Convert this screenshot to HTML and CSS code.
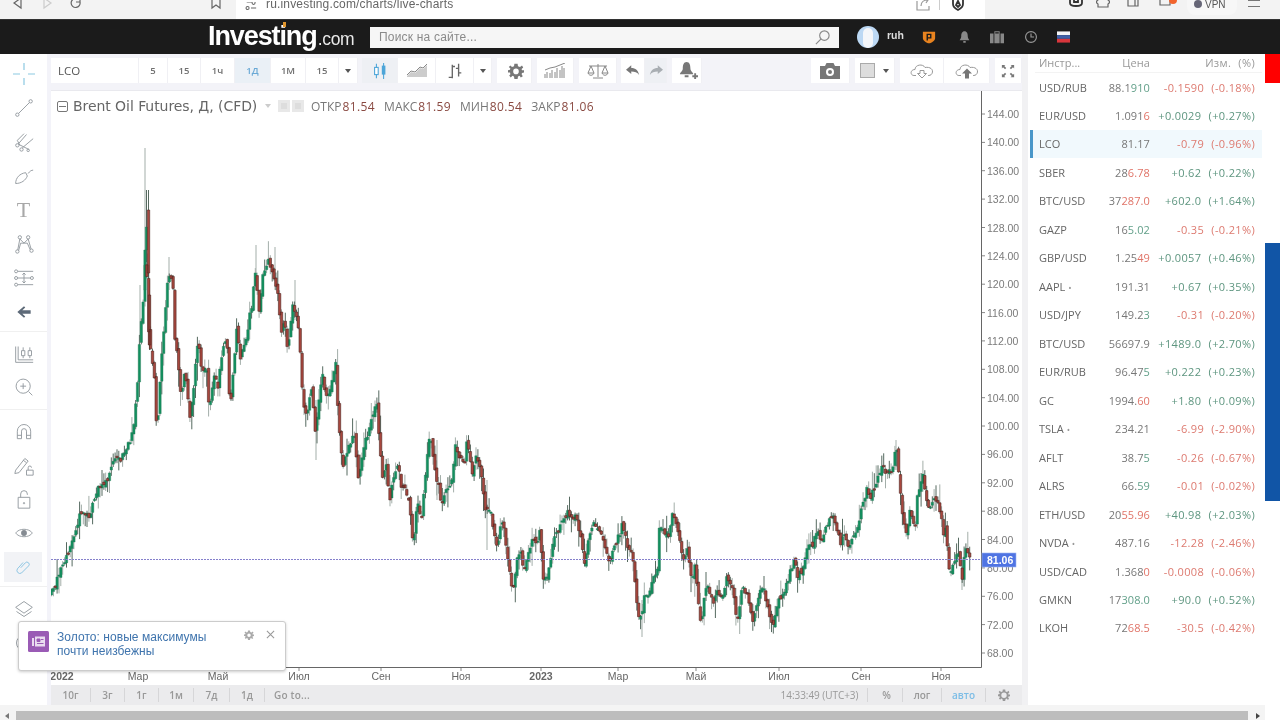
FILE: index.html
```html
<!DOCTYPE html>
<html lang="ru">
<head>
<meta charset="utf-8">
<title>Brent Oil Futures</title>
<link rel="stylesheet" href="styles.css">
</head>
<body>
<div class="browser">
  <div class="nav">
    <svg class="bi" viewBox="0 0 14 14"><path d="M10 1 L3 6 L10 11 Z"/></svg>
    <svg class="bi faded" viewBox="0 0 14 14"><path d="M4 1 L11 6 L4 11 Z"/></svg>
    <svg class="bi" viewBox="0 0 14 14"><path d="M11 5 A4.500 4.500 0 1 1 7 1.500 M11 1 V5 H7"/></svg>
  </div>
  <svg class="bi book" viewBox="0 0 14 14"><path d="M3 0 V11 L7 8 L11 11 V0"/></svg>
  <div class="url">
    <svg class="bi urlic" viewBox="0 0 14 14"><path d="M2 0 H8 M7 7 H13"/><circle cx="10" cy="1" r="1.800"/><circle cx="3" cy="7" r="1.800"/></svg>
    <span class="urltext">ru.investing.com/charts/live-charts</span>
    <svg class="bi share" viewBox="0 0 14 14"><path d="M1 3 V12 H13 V8 M5 8 C5 4 8 2 12 2 M9 0 L12 2 L10 5"/></svg>
    <i class="urlsep"></i>
    <svg class="bi shield" viewBox="0 0 14 14"><path class="dark" d="M2 0 H12 V6 C12 9 9 11 7 12 C5 11 2 9 2 6 Z M7 3 L5 7 L7 9 L9 7 Z"/></svg>
  </div>
  <div class="ext">
    <svg class="bi e1" viewBox="0 0 14 14"><path class="dark" d="M1 0 V7 C1 11 13 11 13 7 V0 M5 0 V6 H9 V0"/></svg>
    <svg class="bi e2" viewBox="0 0 14 14"><path d="M2 0 V4 C0 5 0 7 2 8 V11 H12 V8 C14 7 14 5 12 4 V0"/></svg>
    <svg class="bi e3" viewBox="0 0 14 14"><path d="M2 0 V10 H12 V0 M9 0 V10"/></svg>
    <div class="notif"><svg class="bi e4" viewBox="0 0 14 14"><path d="M2 0 V9 H12 V0"/></svg><i class="notif-dot"></i></div>
    <div class="vpn"><i class="vpn-dot"></i>VPN</div>
    <div class="burger"></div>
  </div>
</div>

<header class="site">
  <div class="logo"><i class="logo-tick"></i>Investing<span class="logo-com">.com</span></div>
  <div class="search">
    <span class="search-ph">Поиск на сайте...</span>
    <svg class="search-ic" viewBox="0 0 18 18"><circle cx="11" cy="7" r="5"/><path d="M7.500 10.500 L2 16"/></svg>
  </div>
  <div class="avatar"><i class="avatar-head"></i></div>
  <span class="user">ruh</span>
  <svg class="hic pro" viewBox="0 0 16 16"><path d="M1 2 H15 V9 C15 12 11 15 8 15 C5 15 1 12 1 9 Z"/><path class="pro-p" d="M6 12 V5 H10 V9 H6"/></svg>
  <svg class="hic bell" viewBox="0 0 16 16"><path d="M8 1 C11 1 12 4 12 7 C12 10 14 11 14 12 H2 C2 11 4 10 4 7 C4 4 5 1 8 1 Z M6.500 13 H9.500 V15 H6.500 Z"/></svg>
  <svg class="hic bag" viewBox="0 0 16 16"><path d="M0 4 H5 V1.500 H11 V4 H16 V15 H0 Z M6 4 H10 V2.500 H6 Z M4 4 V15 H5 V4 Z M11 4 V15 H12 V4 Z" fill-rule="evenodd"/></svg>
  <svg class="hic clock" viewBox="0 0 16 16"><circle cx="8" cy="8" r="6.200"/><path d="M8 4 V8 H11.500"/></svg>
  <svg class="hic flag" viewBox="0 0 14 12"><rect width="14" height="4" y="0" fill="#f4f4f6"/><rect width="14" height="4" y="4" fill="#3f5fa8"/><rect width="14" height="4" y="8" fill="#d8363c"/></svg>
</header>

<main class="main">
  <aside class="tools">
    <div class="tool-group g1">
      <div class="tool"><svg class="ti blue" viewBox="0 0 24 24"><path d="M12 1 V8 M12 16 V23 M1 12 H8 M16 12 H23"/></svg></div>
      <div class="tool"><svg class="ti" viewBox="0 0 24 24"><circle cx="4" cy="20" r="2"/><circle cx="20" cy="4" r="2"/><path d="M5.500 18.500 L18.500 5.500"/></svg></div>
      <div class="tool"><svg class="ti" viewBox="0 0 24 24"><circle cx="4" cy="16" r="2"/><circle cx="9" cy="21" r="2"/><circle cx="17" cy="22" r="1.500"/><path d="M5 14.500 L15 3 M7 16 L4 10 L12 2 M10 19 L23 8 M6 15 L18 21"/></svg></div>
      <div class="tool"><svg class="ti" viewBox="0 0 24 24"><path d="M2 21 C2 14 7 9 14 8 L16 12 C14 17 9 21 2 21 Z M17 9 C19 6 21 5 23 5"/></svg></div>
      <div class="tool"><span class="ti-t">T</span></div>
      <div class="tool"><svg class="ti" viewBox="0 0 24 24"><circle cx="4" cy="21" r="2"/><circle cx="7" cy="4" r="2"/><circle cx="17" cy="4" r="2"/><circle cx="21" cy="20" r="2"/><path d="M4.500 19 L7 6 L12 11 L17 6 L20.500 18 M5.500 20 L8 11 H16 L19.500 19"/></svg></div>
      <div class="tool"><svg class="ti" viewBox="0 0 24 24"><circle cx="2.500" cy="4" r="1.800"/><circle cx="2.500" cy="12" r="1.800"/><circle cx="2.500" cy="20" r="1.800"/><circle cx="21.500" cy="12" r="1.800"/><path d="M4.500 4 H23 M4.500 12 H19.500 M4.500 20 H23 M12 6 V18 M10 8 L12 6 L14 8 M10 16 L12 18 L14 16"/></svg></div>
      <div class="tool"><svg class="ti solid" viewBox="0 0 24 24"><path d="M4 12 L12 5 L13.500 6.500 L10 10 H20 V14 H10 L13.500 17.500 L12 19 Z"/></svg></div>
    </div>
    <div class="tool-group g2">
      <div class="tool"><svg class="ti" viewBox="0 0 24 24"><path d="M2 3 V22 H23 M5 3 V19 H23 M9 8 H13 V14 H9 Z M11 4 V8 M11 14 V17 M17 8 H21 V14 H17 Z M19 4 V8 M19 14 V17"/></svg></div>
      <div class="tool"><svg class="ti" viewBox="0 0 24 24"><circle cx="11" cy="11" r="8.500"/><path d="M11 7.500 V14.500 M7.500 11 H14.500 M17.500 17.500 L22 22"/></svg></div>
    </div>
    <div class="tool-group g3">
      <div class="tool"><svg class="ti" viewBox="0 0 24 24"><path d="M4 20 V11 A8 8 0 0 1 20 11 V20 H15 V11 A3 3 0 0 0 9 11 V20 Z M4 16 H9 M15 16 H20"/></svg></div>
      <div class="tool"><svg class="ti" viewBox="0 0 24 24"><path d="M2 17 L13 3 L17 6 L6 20 L1 21 Z M11 5 L15 8 M15 17 H23 V23 H15 Z M17 17 V14 A2 2 0 0 1 21 14"/></svg></div>
      <div class="tool"><svg class="ti" viewBox="0 0 24 24"><path d="M5 10 H19 V23 H5 Z M8 10 V6 A4 4 0 0 1 16 6 V7"/><circle cx="12" cy="17" r="0.800"/></svg></div>
      <div class="tool"><svg class="ti" viewBox="0 0 24 24"><path d="M2 12 C6 6 18 6 22 12 C18 18 6 18 2 12 Z"/><circle class="fillc" cx="12" cy="12" r="3.500"/></svg></div>
      <div class="tool active"><svg class="ti lblue" viewBox="0 0 24 24"><path d="M9 13 L15 6.500 A3 3 0 0 1 19.500 10.500 L10 20 A4 4 0 0 1 4.500 14.500 L12 6"/></svg></div>
    </div>
    <div class="tool-group g4">
      <div class="tool"><svg class="ti" viewBox="0 0 24 24"><path d="M12 3 L22 10 L12 17 L2 10 Z M3 15 L12 21 L21 15"/></svg></div>
      <div class="tool"><svg class="ti" viewBox="0 0 24 24"><circle cx="12" cy="12" r="9"/></svg></div>
    </div>
  </aside>

  <section class="chartcol">
    <div class="toolbar">
      <div class="tb w-88 lco">LCO</div>
      <div class="tb-group">
        <div class="tb w-29">5</div><div class="tb w-33">15</div><div class="tb w-34">1ч</div><div class="tb w-36 sel">1Д</div><div class="tb w-35">1М</div><div class="tb w-33">15</div><div class="tb w-19"><i class="caret"></i></div>
      </div>
      <div class="tb-group gap-4">
        <div class="tb w-36 on"><svg class="tbi" viewBox="0 0 16 20"><path class="cblue" d="M4 2 V18 M12 1 V19"/><rect class="cblue nofill" x="2" y="6" width="4" height="8"/><rect class="cbluef" x="10" y="4" width="4" height="10"/></svg></div>
        <div class="tb w-38"><svg class="tbi wide" viewBox="0 0 22 14"><path class="fillg" d="M1 12 L5 8 L9 9 L14 4 L17 5 L21 1 V13 H1 Z"/><path d="M1 11 L5 7 L9 8 L14 3 L17 4 L21 0"/></svg></div>
        <div class="tb w-38"><svg class="tbi" viewBox="0 0 16 20"><path class="thick" d="M5 3 V18 M1 17 H5 M5 5 H8 M12 2 V16 M12 7 H9 M12 12 H15"/></svg></div>
        <div class="tb w-18"><i class="caret"></i></div>
      </div>
      <div class="tb w-35 gap-5 nudge"><svg class="tbi solid" viewBox="0 0 20 20"><path fill-rule="evenodd" d="M8 1 H12 L12.500 4 L15 5 L17.500 3 L19 5.500 L17 7.500 L17.500 9 H20 V12 L17.500 12.500 L17 14 L18.500 16.500 L16 18 L14.500 16 L12.500 17 L12 20 H8 L7.500 17 L5.500 16 L3.500 18 L1.500 15.500 L3 14 L2.500 12 H0 V9 L2.500 8.500 L3 7 L1 5 L3 3 L5 5 L7.500 4 Z M10 7 A3.500 3.500 0 1 0 10 14 A3.500 3.500 0 1 0 10 7 Z"/></svg></div>
      <div class="tb w-37 gap-5"><svg class="tbi wide" viewBox="0 0 22 16"><path d="M1 15 V11 M3 15 V9 M6 15 V10 M8 15 V7 M11 15 V9 M13 15 V5 M16 15 V7 M18 15 V3 M20 15 V5 M1 7 L6 5 L11 4 L16 2 L21 0" /></svg></div>
      <div class="tb w-38 gap-5"><svg class="tbi wide" viewBox="0 0 22 16"><path d="M11 1 V14 M6 15 H16 M2 3 H20 M4 3 L1 10 H7 Z M18 3 L15 10 H21 Z M1 10 C2 13 6 13 7 10 M15 10 C16 13 20 13 21 10"/></svg></div>
      <div class="tb-group gap-4">
        <div class="tb w-24"><svg class="tbi small solid" viewBox="0 0 16 12"><path d="M0 5 L6 0 V3 C11 3 14 6 15 11 C13 8 10 7 6 7 V10 Z"/></svg></div>
        <div class="tb w-22 on"><svg class="tbi small solid pale" viewBox="0 0 16 12"><path d="M16 5 L10 0 V3 C5 3 2 6 1 11 C3 8 6 7 10 7 V10 Z"/></svg></div>
      </div>
      <div class="tb w-30 gap-5"><svg class="tbi solid alert" viewBox="0 0 20 20"><path d="M8 1 C11 1 12 4 12 8 C12 11 15 12 15 14 H1 C1 12 4 11 4 8 C4 4 5 1 8 1 Z M6 15 H10 V17 H6 Z M14 15 H16 V13 H18 V15 H20 V17 H18 V19 H16 V17 H14 Z"/></svg></div>
      <div class="tb-spacer"></div>
      <div class="tb w-39"><svg class="tbi cam solid" viewBox="0 0 20 16"><path fill-rule="evenodd" d="M0 3 H5 L6.500 0 H13.500 L15 3 H20 V16 H0 Z M10 5 A4 4 0 1 0 10 13 A4 4 0 1 0 10 5 Z M10 7 A2 2 0 1 1 10 11 A2 2 0 1 1 10 7 Z"/></svg></div>
      <div class="tb-group gap-5">
        <div class="tb w-40 square-wrap"><i class="swatch"></i><i class="caret"></i></div>
      </div>
      <div class="tb-group gap-5">
        <div class="tb w-44"><svg class="tbi cloud" viewBox="0 0 24 16"><path d="M6 13 H4 C0 13 0 7 5 7 C5 2 13 1 15 5 C20 4 24 7 22 11 C21 13 19 13 18 13 M10 8 H14 V11 H16.500 L12 15.500 L7.500 11 H10 Z"/></svg></div>
        <div class="tb w-46"><svg class="tbi cloud" viewBox="0 0 24 16"><path d="M6 13 H4 C0 13 0 7 5 7 C5 2 13 1 15 5 C20 4 24 7 22 11 C21 13 19 13 18 13"/><path class="filld" d="M10 16 V11 H7 L12 6 L17 11 H14 V16 Z"/></svg></div>
      </div>
      <div class="tb w-27 gap-5"><svg class="tbi fs" viewBox="0 0 16 16"><path class="filld" d="M1 1 H5 L3.700 2.300 L6 4.600 L4.600 6 L2.300 3.700 L1 5 Z M15 1 V5 L13.700 3.700 L11.400 6 L10 4.600 L12.300 2.300 L11 1 Z M1 15 V11 L2.300 12.300 L4.600 10 L6 11.400 L3.700 13.700 L5 15 Z M15 15 H11 L12.300 13.700 L10 11.400 L11.400 10 L13.700 12.300 L15 11 Z"/></svg></div>
    </div>

    <div class="plot">
      <svg id="chart" class="chart" viewBox="51 91 971 594" preserveAspectRatio="none"></svg>
      <div class="legend">
        <i class="collapse"></i>
        <span class="l-title">Brent Oil Futures, Д, (CFD)</span>
        <i class="l-caret"></i>
        <i class="l-sq"></i><i class="l-sq"></i>
        <span class="l-k k1">ОТКР</span><span class="l-v">81.54</span>
        <span class="l-k">МАКС</span><span class="l-v">81.59</span>
        <span class="l-k">МИН</span><span class="l-v">80.54</span>
        <span class="l-k">ЗАКР</span><span class="l-v">81.06</span>
      </div>
    </div>

    <div class="bottombar">
      <span class="bb w-40b">10г</span><span class="bb w-34b">3г</span><span class="bb w-34b">1г</span><span class="bb w-35b">1м</span><span class="bb w-36b">7д</span><span class="bb w-35b">1д</span><span class="bb goto">Go to...</span>
      <span class="bb-spacer"></span>
      <span class="bb time">14:33:49 (UTC+3)</span><span class="bb w-32b">%</span><span class="bb w-39b">лог</span><span class="bb w-44b auto">авто</span>
      <span class="bb w-36b last"><svg class="bb-gear" viewBox="0 0 20 20"><path fill-rule="evenodd" d="M8 1 H12 L12.500 4 L15 5 L17.500 3 L19 5.500 L17 7.500 L17.500 9 H20 V12 L17.500 12.500 L17 14 L18.500 16.500 L16 18 L14.500 16 L12.500 17 L12 20 H8 L7.500 17 L5.500 16 L3.500 18 L1.500 15.500 L3 14 L2.500 12 H0 V9 L2.500 8.500 L3 7 L1 5 L3 3 L5 5 L7.500 4 Z M10 6 A4.500 4.500 0 1 0 10 15 A4.500 4.500 0 1 0 10 6 Z"/></svg></span>
    </div>
  </section>

  <div class="splitter"></div>

  <aside class="panel">
    <div class="row head"><span class="n">Инстр...</span><span class="p">Цена</span><span class="c">Изм. (%)</span></div>
    <div class="row"><span class="n">USD/RUB</span><span class="p">88.1<b class="g">910</b></span><span class="c r">-0.1590 (-0.18%)</span></div>
    <div class="row"><span class="n">EUR/USD</span><span class="p">1.091<b class="r">6</b></span><span class="c g">+0.0029 (+0.27%)</span></div>
    <div class="row cur"><span class="n">LCO</span><span class="p">81.17</span><span class="c r">-0.79 (-0.96%)</span></div>
    <div class="row"><span class="n">SBER</span><span class="p">28<b class="r">6.78</b></span><span class="c g">+0.62 (+0.22%)</span></div>
    <div class="row"><span class="n">BTC/USD</span><span class="p">37<b class="r">287.0</b></span><span class="c g">+602.0 (+1.64%)</span></div>
    <div class="row"><span class="n">GAZP</span><span class="p">16<b class="g">5.02</b></span><span class="c r">-0.35 (-0.21%)</span></div>
    <div class="row"><span class="n">GBP/USD</span><span class="p">1.25<b class="r">49</b></span><span class="c g">+0.0057 (+0.46%)</span></div>
    <div class="row"><span class="n">AAPL <em>•</em></span><span class="p">191.31</span><span class="c g">+0.67 (+0.35%)</span></div>
    <div class="row"><span class="n">USD/JPY</span><span class="p">149.2<b class="g">3</b></span><span class="c r">-0.31 (-0.20%)</span></div>
    <div class="row"><span class="n">BTC/USD</span><span class="p">56697.9</span><span class="c g">+1489.0 (+2.70%)</span></div>
    <div class="row"><span class="n">EUR/RUB</span><span class="p">96.47<b class="g">5</b></span><span class="c g">+0.222 (+0.23%)</span></div>
    <div class="row"><span class="n">GC</span><span class="p">1994.<b class="r">60</b></span><span class="c g">+1.80 (+0.09%)</span></div>
    <div class="row"><span class="n">TSLA <em>•</em></span><span class="p">234.21</span><span class="c r">-6.99 (-2.90%)</span></div>
    <div class="row"><span class="n">AFLT</span><span class="p">38.7<b class="g">5</b></span><span class="c r">-0.26 (-0.67%)</span></div>
    <div class="row"><span class="n">ALRS</span><span class="p">66.<b class="g">59</b></span><span class="c r">-0.01 (-0.02%)</span></div>
    <div class="row"><span class="n">ETH/USD</span><span class="p">20<b class="r">55.96</b></span><span class="c g">+40.98 (+2.03%)</span></div>
    <div class="row"><span class="n">NVDA <em>•</em></span><span class="p">487.16</span><span class="c r">-12.28 (-2.46%)</span></div>
    <div class="row"><span class="n">USD/CAD</span><span class="p">1.368<b class="r">0</b></span><span class="c r">-0.0008 (-0.06%)</span></div>
    <div class="row"><span class="n">GMKN</span><span class="p">17<b class="g">308.0</b></span><span class="c g">+90.0 (+0.52%)</span></div>
    <div class="row"><span class="n">LKOH</span><span class="p">72<b class="r">68.5</b></span><span class="c r">-30.5 (-0.42%)</span></div>
  </aside>

  <aside class="ads">
    <div class="ad-red"></div>
    <div class="ad-blue"></div>
  </aside>
</main>

<div class="hscroll">
  <i class="arrow left"></i>
  <div class="thumb"></div>
  <i class="arrow right"></i>
</div>

<div class="popup">
  <svg class="pop-ic" viewBox="0 0 21 21"><rect width="21" height="21" rx="1.500" fill="#9a5bb5"/><path d="M4 7 H6 V15 H4 Z M7 5.500 H17 V15.500 H7 Z" fill="#eadcf0"/><path d="M9 8 H12 V10.500 H9 Z M13 8.500 H15.500 M9 12.500 H15.500" stroke="#9a5bb5" fill="#9a5bb5"/></svg>
  <div class="pop-text">Золото: новые максимумы<br>почти неизбежны</div>
  <svg class="pop-gear" viewBox="0 0 20 20"><path fill-rule="evenodd" d="M8 1 H12 L12.500 4 L15 5 L17.500 3 L19 5.500 L17 7.500 L17.500 9 H20 V12 L17.500 12.500 L17 14 L18.500 16.500 L16 18 L14.500 16 L12.500 17 L12 20 H8 L7.500 17 L5.500 16 L3.500 18 L1.500 15.500 L3 14 L2.500 12 H0 V9 L2.500 8.500 L3 7 L1 5 L3 3 L5 5 L7.500 4 Z M10 7 A3.500 3.500 0 1 0 10 14 A3.500 3.500 0 1 0 10 7 Z"/></svg>
  <svg class="pop-x" viewBox="0 0 10 10"><path d="M1 1 L9 9 M9 1 L1 9"/></svg>
</div>

<script src="chart.js"></script>
</body>
</html>
```
FILE: styles.css
```css
* { box-sizing: border-box; }
html, body { margin: 0; padding: 0; height: 720px; overflow: hidden; }
html { background: #fff; }
body { position: relative; width: 1280px; background: #fff; font-family: "Open Sans", "Liberation Sans", sans-serif; color: #666; filter: blur(.3px); }
i, em { font-style: normal; }
b { font-weight: inherit; }

/* browser chrome */
.browser { height: 20px; background: #f3f3f3; border-bottom: 1px solid #333; display: flex; align-items: flex-start; overflow: hidden; position: relative; }
.bi { fill: none; stroke: #666; stroke-width: 1.2; width: 14px; height: 14px; display: block; }
.bi .dark { stroke: #333; stroke-width: 1.8; }
.nav { display: flex; gap: 15px; padding-left: 11px; width: 209px; margin-top: -3px; }
.faded { stroke: #ccc; }
.book { margin-top: -3px; }
.url { margin-left: 13px; width: 749px; height: 19px; background: #fff; display: flex; align-items: flex-start; padding-left: 9px; }
.urlic { margin-top: 2px; width: 12px; height: 12px; }
.urltext { font: 12px/12px "Liberation Sans", sans-serif; color: #666; margin: -2px 0 0 9px; width: 650px; letter-spacing: .17px; }
.share { margin: -2px 0 0 0; stroke: #999; }
.urlsep { width: 1px; height: 10px; background: #ccc; margin: 0 11px 0 9px; }
.shield { margin-top: -2px; }
.ext { display: flex; align-items: flex-start; flex: 1; padding-left: 84px; }
.e1 { margin-top: -4px; }
.e2 { margin: -4px 0 0 13px; }
.e3 { margin: -4px 0 0 16px; }
.notif { position: relative; margin-left: 18px; margin-top: -4px; }
.notif-dot { position: absolute; right: -5px; top: 0; width: 8px; height: 8px; border-radius: 50%; background: #f2642d; }
.vpn { margin-left: 15px; width: 50px; height: 15px; border-radius: 0 0 8px 8px; background: #f7f7f7; font: 10px/9px "Liberation Sans", sans-serif; color: #555; display: flex; gap: 3px; padding-left: 7px; }
.vpn-dot { width: 8px; height: 8px; border-radius: 50%; background: #667; }
.burger { margin: 0 0 0 11px; width: 12px; height: 7px; border-top: 1px solid #777; border-bottom: 1px solid #777; }

/* site header */
.site { height: 34px; background: #1b1b1b; display: flex; align-items: center; padding-left: 208px; position: relative; }
.logo { position: relative; color: #fff; font: 700 27px/34px "Liberation Sans", sans-serif; letter-spacing: -1.1px; width: 162px; padding-top: 1px; }
.logo-com { font-weight: 400; font-size: 17.500px; letter-spacing: -.3px; color: #e9e9e9; margin-left: 1px; }
.logo-tick { position: absolute; left: 75px; top: 4px; width: 3px; height: 5px; background: #e0952c; }
.search { width: 469px; height: 21px; background: #f6f6f6; display: flex; align-items: center; justify-content: space-between; padding: 0 8px 0 9px; }
.search-ph { font: 12px "Liberation Sans", sans-serif; color: #8a8a8a; letter-spacing: .2px; }
.search-ic { width: 17px; height: 17px; fill: none; stroke: #888; stroke-width: 1.2; }
.avatar { width: 22px; height: 22px; border-radius: 50%; background: #bcd8f4; margin-left: 18px; position: relative; overflow: hidden; }
.avatar-head { position: absolute; left: 6px; top: 2px; width: 10px; height: 20px; border-radius: 5px; background: #f4f6fa; }
.user { font: 700 10.500px "Liberation Sans", sans-serif; color: #ddd; margin: -4px 0 0 8px; width: 24px; }
.hic { width: 14px; height: 14px; display: block; fill: #888; }
.pro { margin-left: 11px; fill: #e8831f; }
.pro-p { fill: none; stroke: #1b1b1b; stroke-width: 1.6; }
.bell { margin-left: 22px; width: 13px; }
.bag { margin-left: 18px; width: 16px; }
.clock { margin-left: 19px; fill: none; stroke: #999; stroke-width: 1.3; }
.flag { margin-left: 19px; width: 13px; }

/* main */
.main { height: 651px; display: flex; background: #fff; }

/* left tools */
.tools { width: 51px; flex: none; background: #fff; border-right: 4px solid #f3f3f9; padding-top: 3px; }
.tool { display: flex; align-items: center; justify-content: center; height: 34px; }
.tool-group { border-bottom: 1px solid #f0f0f0; padding-bottom: 2px; margin-bottom: 5px; }
.g2 { padding-bottom: 5px; }
.g2 .tool { height: 33.500px; }
.g3 .tool { height: 33.800px; }
.g3 { padding-bottom: 4px; }
.g4 { border-bottom: 0; }
.tool.active { background: #f2f3f6; margin: 0 5px 0 4px; height: 30px; margin-top: 2px; }
.ti { width: 20px; height: 20px; fill: none; stroke: #92989e; stroke-width: 1.100; display: block; }
.ti.blue { stroke: #8cc9e2; width: 24px; height: 24px; stroke-width: 1.200; }
.ti.lblue { stroke: #8cc4e2; stroke-width: 1.300; width: 18px; height: 18px; }
.ti.solid { fill: #5d6a78; stroke: none; }
.ti .fillc { fill: #858b92; stroke: none; }
.ti-t { font: 22px/24px "Liberation Serif", serif; color: #a8a8a8; }

/* toolbar */
.chartcol { width: 971px; flex: none; display: flex; flex-direction: column; }
.toolbar { height: 37px; background: #f3f3f8; display: flex; align-items: flex-start; padding-top: 4px; border-bottom: 1px solid #e9e9ee; }
.tb-group { display: flex; }
.tb { height: 25px; background: #fff; display: flex; align-items: center; justify-content: center; font-size: 9.500px; font-weight: 600; color: #707070; border-right: 1px solid #f0f0f4; flex: none; }
.tb.sel { background: #eaf0f6; color: #6aa9d6; }
.tb.on { background: #eef0f4; }
.tb.lco { justify-content: flex-start; padding-left: 7px; font-size: 11.500px; font-weight: 400; color: #555; }
.tb.nudge { padding-left: 3px; }
.tb-spacer { flex: 1; }
.gap-4 { margin-left: 4px; }
.gap-5 { margin-left: 5px; }
.w-18 { width: 18px; } .w-19 { width: 19px; } .w-22 { width: 22px; } .w-24 { width: 24px; } .w-27 { width: 27px; }
.w-29 { width: 29px; } .w-30 { width: 30px; } .w-33 { width: 33px; } .w-34 { width: 34px; } .w-35 { width: 35px; }
.w-36 { width: 36px; } .w-37 { width: 37px; } .w-38 { width: 38px; } .w-39 { width: 39px; } .w-40 { width: 40px; }
.w-44 { width: 44px; } .w-46 { width: 46px; } .w-88 { width: 88px; }
.caret { width: 0; height: 0; border-left: 3.500px solid transparent; border-right: 3.500px solid transparent; border-top: 4px solid #555; display: block; }
.tbi { width: 16px; height: 18px; fill: none; stroke: #777; stroke-width: 1; display: block; }
.tbi.wide { width: 22px; height: 16px; stroke: #888; }
.tbi.small { width: 14px; height: 11px; }
.tbi.solid { fill: #777; stroke: none; }
.tbi.pale { fill: #a9aeb3; }
.tbi.alert { width: 19px; height: 19px; margin-left: 3px; }
.tbi.cam { width: 20px; height: 16px; }
.tbi.cloud { width: 24px; height: 17px; stroke: #999; }
.tbi.fs { width: 14px; height: 14px; stroke: none; }
.tbi .cblue { stroke: #4da5d8; stroke-width: 1.2; }
.tbi .nofill { fill: #fff; }
.tbi .cbluef { fill: #4da5d8; stroke: none; }
.tbi .fillg { fill: #ccc; stroke: none; }
.tbi .thick { stroke: #666; stroke-width: 1.500; }
.tbi .filld { fill: #777; stroke: none; }
.square-wrap { gap: 8px; }
.swatch { width: 15px; height: 15px; background: #ddd; border: 1px solid #aaa; display: block; }

/* plot */
.plot { height: 594px; position: relative; background: #fff; }
.chart { width: 971px; height: 594px; display: block; }
.chart text { font: 10.500px "Liberation Sans", sans-serif; fill: #7a7a7a; }
.chart .xl { fill: #666; }
.chart .xb { font-weight: 700; }
.chart .pl { font-weight: 700; fill: #fff; }
.legend { position: absolute; left: 6px; top: 5px; height: 20px; display: flex; align-items: center; white-space: nowrap; font-size: 12px; color: #777; }
.collapse { width: 11px; height: 11px; border: 1px solid #777; border-radius: 2px; position: relative; display: block; margin-right: 5px; }
.collapse::after { content: ""; position: absolute; left: 1px; right: 1px; top: 4px; height: 1px; background: #777; }
.l-title { font: 14px "DejaVu Sans", sans-serif; color: #666; width: 192px; letter-spacing: -.06px; }
.l-caret { width: 0; height: 0; border-left: 3px solid transparent; border-right: 3px solid transparent; border-top: 4px solid #ccc; display: block; margin-right: 7px; }
.l-sq { width: 12px; height: 12px; background: #ddd; border: 3px solid #e8e8e8; display: block; margin-right: 2px; }
.l-k { margin-left: 9px; font-size: 12px; color: #777; }
.k1 { margin-left: 5px; }
.l-v { color: #8a4a42; font-size: 12px; margin-left: 1px; letter-spacing: .4px; }

/* bottom bar */
.bottombar { height: 20px; background: #ebebed; display: flex; align-items: center; font-size: 10px; color: #999; }
.bb { height: 14px; line-height: 14px; text-align: center; border-right: 1px solid #d6d6d8; flex: none; font-weight: 600; }
.w-40b { width: 40px; } .w-32b { width: 32px; } .w-34b { width: 34px; } .w-35b { width: 35px; } .w-36b { width: 36px; } .w-39b { width: 39px; } .w-44b { width: 44px; }
.goto { border: 0; padding-left: 9px; letter-spacing: .2px; }
.bb-spacer { flex: 1; }
.time { width: 96px; font-weight: 400; letter-spacing: -.05px; margin-right: 3px; }
.auto { color: #7cbde6; }
.last { border: 0; display: flex; align-items: center; justify-content: center; }
.bb-gear { width: 12px; height: 12px; fill: #999; display: block; }

.splitter { width: 6px; flex: none; background: #f1f1f3; }

/* panel */
.panel { width: 237px; flex: none; background: #fff; padding-top: 0; }
.row { height: 28.470px; display: flex; align-items: center; font-size: 11px; color: #666; padding-left: 9px; margin-left: 2px; margin-right: 3px; white-space: nowrap; }
.row.head { height: 18.800px; color: #999; border-bottom: 1px solid #f3f3f3; margin-left: 7px; padding-left: 4px; align-items: flex-start; padding-top: 1px; }
.row.cur { background: #f1f9fd; border-left: 3px solid #4a97c9; padding-left: 6px; margin-left: 2px; }
.n { width: 60px; flex: none; }
.n em { color: #999; font-size: 9px; }
.p { width: 51px; flex: none; text-align: right; color: #777; letter-spacing: .1px; }
.c { width: 105px; flex: none; text-align: right; letter-spacing: .35px; word-spacing: 4px; }
.head .n, .head .p, .head .c { color: #999; }
.g { color: #5d957f; }
.p .g { color: #63a08a; }
.r { color: #dd7a70; }
.p .r { color: #e07468; }

/* ads */
.ads { width: 15px; flex: none; display: flex; flex-direction: column; background: #fff; }
.ad-red { height: 29px; background: #f00; }
.ad-blue { margin-top: 160px; height: 258px; background: #1155a6; }

/* horizontal scrollbar */
.hscroll { height: 15px; width: 1265px; background: #f4f4f4; padding-top: 6px; display: flex; align-items: flex-start; position: relative; }
.thumb { position: absolute; left: 16px; top: 6px; width: 1232px; height: 9px; background: #bdbdbd; }
.arrow { position: absolute; top: 8px; width: 0; height: 0; border-top: 3.500px solid transparent; border-bottom: 3.500px solid transparent; }
.arrow.left { left: 5px; border-right: 4px solid #777; }
.arrow.right { left: 1256px; border-left: 4px solid #444; }

/* popup */
.popup { position: absolute; left: 18px; top: 621px; width: 268px; height: 50px; background: #fff; border: 1px solid #ccc; border-radius: 3px; box-shadow: 0 1px 3px rgba(0,0,0,.2); }
.pop-ic { position: absolute; left: 9px; top: 9px; width: 21px; height: 21px; display: block; }
.pop-text { position: absolute; left: 38px; top: 8px; font: 12px/14px "Liberation Sans", sans-serif; color: #3f74ad; letter-spacing: .05px; }
.pop-gear { position: absolute; left: 225px; top: 8px; width: 10px; height: 10px; fill: #aaa; }
.pop-x { position: absolute; left: 247px; top: 8px; width: 9px; height: 9px; stroke: #999; stroke-width: 1.200; fill: none; }
```
FILE: chart.js
```js
(function () {
  var NS = 'http://www.w3.org/2000/svg';
  var svg = document.getElementById('chart');
  var pts = [[51,593],[58,577],[68,555],[75,533],[80,515],[90,515],[97,490],[108,480],[115,457],[120,462],[127,448],[133,433],[137,390],[140,330],[143,303],[146,250],[149,343],[152,357],[154,370],[157,437],[160,380],[165,313],[168,273],[173,287],[174,333],[178,363],[181,393],[185,370],[190,420],[194,383],[198,337],[202,373],[207,370],[209,407],[215,370],[218,387],[223,347],[227,337],[228,377],[230,412],[235,347],[237,325],[240,360],[247,332],[252,303],[255,267],[259,310],[263,273],[268,260],[277,287],[281,330],[285,323],[288,353],[293,300],[297,320],[300,345],[303,403],[307,417],[312,383],[315,433],[322,373],[327,400],[333,373],[337,353],[337.500,397],[338,423],[343,467],[348,450],[354,430],[358,478],[363,450],[368,433],[372,420],[377,403],[380,450],[382,478],[387,460],[389,510],[393,477],[398,463],[402,490],[406,492],[410,505],[413,547],[417,503],[422,520],[425,477],[430,435],[435,470],[442,505],[445,493],[451,485],[455,447],[460,457],[466,460],[467,435],[472,473],[477,455],[482,477],[485,513],[490,508],[493,530],[498,547],[500,528],[503,520],[508,560],[512,592],[517,560],[520,547],[523,570],[530,547],[533,533],[537,550],[540,525],[543,582],[548,577],[553,540],[562,523],[568,512],[572,522],[575,513],[580,533],[585,568],[588,540],[593,522],[600,528],[605,545],[609,563],[615,547],[623,523],[627,547],[632,550],[635,580],[638,617],[642,618],[645,592],[649,600],[652,580],[658,569],[659.500,523],[668,537],[672,515],[677,527],[680,543],[683,560],[687,547],[692,583],[695,567],[698,602],[701,628],[705,587],[709,587],[713,607],[718,590],[722,597],[727,578],[733,593],[737,622],[742,587],[748,593],[752,623],[757,600],[763,587],[767,608],[773,623],[778,600],[785,590],[788,580],[795,557],[798,577],[803,567],[808,543],[813,545],[817,528],[821,547],[825,527],[832,513],[840,542],[845,537],[850,547],[858,525],[863,502],[867,490],[870,497],[877,480],[882,463],[887,473],[892,472],[896,448],[898,460],[900,490],[903,523],[907,538],[909,510],[915,527],[918,490],[923,473],[928,510],[937,497],[939,513],[943,518],[942.500,533],[946,530],[949,570],[953,567],[958,547],[962,585],[965,548],[968,550],[971,558]];

  function at(x) {
    for (var i = 1; i < pts.length; i++) {
      if (x <= pts[i][0]) {
        var a = pts[i - 1], b = pts[i], t = (x - a[0]) / ((b[0] - a[0]) || 1);
        return a[1] + (b[1] - a[1]) * t;
      }
    }
    return pts[pts.length - 1][1];
  }
  var seed = 12345;
  function rnd() { seed = (seed * 16807) % 2147483647; return seed / 2147483647; }

  var G = '#12905f', R = '#a8473e', W = '#566a60', WL = '#a3aea9';
  var wick = '', wickL = '', gb = '', rb = '';
  function candle(x, o, c, h, l, light) {
    var seg = 'M' + x.toFixed(1) + ' ' + h.toFixed(1) + 'V' + l.toFixed(1);
    if (light) { wickL += seg; } else { wick += seg; }
    var top = Math.min(o, c), bot = Math.max(o, c);
    if (bot - top < 1.5) bot = top + 1.5;
    var box = 'M' + (x - 1.2).toFixed(1) + ' ' + top.toFixed(1) + 'h2.4V' + bot.toFixed(1) + 'h-2.4Z';
    if (c <= o) gb += box; else rb += box;
  }

  var prev = at(51);
  for (var x = 51.5; x <= 971; x += 1.87) {
    var close = at(x) + (rnd() - 0.5) * 7;
    var open = prev + (rnd() - 0.5) * 6;
    var top = Math.min(open, close), bot = Math.max(open, close);
    var light = rnd() > 0.55;
    candle(x, open, close, top - rnd() * rnd() * 20 - 0.5, bot + rnd() * rnd() * 20 + 0.5, light);
    prev = close;
  }
  /* the March 2022 spike */
  candle(145, 290, 250, 148, 295, true);
  candle(146.500, 250, 227, 190, 262, false);
  candle(148.500, 210, 273, 190, 290, false);
  candle(149.500, 295, 345, 280, 350, false);
  /* other long shadows */
  [[140,285,340],[169,257,290],[256,245,290],[275,247,290],[295,280,320],[316,400,460],[487,480,550],[642,600,637],[896,440,470],[962,560,590],[437,440,500]].forEach(function (w) {
    wickL += 'M' + w[0] + ' ' + w[1] + 'V' + w[2];
  });

  function el(name, attrs, text, parent) {
    var e = document.createElementNS(NS, name);
    for (var k in attrs) e.setAttribute(k, attrs[k]);
    if (text) e.textContent = text;
    (parent || svg).appendChild(e);
    return e;
  }

  var g = el('g', { 'class': 'candles' });
  el('path', { d: wickL, stroke: WL, 'stroke-width': 1, fill: 'none' }, null, g);
  el('path', { d: wick, stroke: W, 'stroke-width': 1, fill: 'none' }, null, g);
  el('path', { d: gb, fill: G, stroke: '#2a7a58', 'stroke-width': 0.4 }, null, g);
  el('path', { d: rb, fill: R, stroke: '#4f2622', 'stroke-width': 0.6 }, null, g);

  /* price line */
  el('path', { d: 'M51 559.500H981', stroke: '#8580cc', 'stroke-width': 1, 'stroke-dasharray': '2 1', fill: 'none' });

  /* frame */
  el('path', { d: 'M981.500 91V667.500H51', stroke: '#666', 'stroke-width': 1, fill: 'none' });

  /* price axis */
  for (var p = 144; p >= 68; p -= 4) {
    var y = 114 + (144 - p) * 7.092;
    el('path', { d: 'M982 ' + y.toFixed(1) + 'h3', stroke: '#888', 'stroke-width': 1 });
    el('text', { x: 987, y: (y + 4).toFixed(1) }, p.toFixed(2));
  }
  el('rect', { x: 982, y: 553, width: 34, height: 14, fill: '#4f74e3', stroke: '#9db4f2', 'stroke-width': 0.6 });
  el('text', { x: 987, y: 564, 'class': 'pl' }, '81.06');

  /* time axis */
  var xl = [[62,'2022',1],[138,'Мар'],[218,'Май'],[299,'Июл'],[381,'Сен'],[461,'Ноя'],[541,'2023',1],[618,'Мар'],[696,'Май'],[779,'Июл'],[861,'Сен'],[941,'Ноя']];
  xl.forEach(function (d) {
    el('path', { d: 'M' + d[0] + ' 668v3', stroke: '#888', 'stroke-width': 1 });
    el('text', { x: d[0], y: 680, 'text-anchor': 'middle', 'class': d[2] ? 'xl xb' : 'xl' }, d[1]);
  });
})();
```
